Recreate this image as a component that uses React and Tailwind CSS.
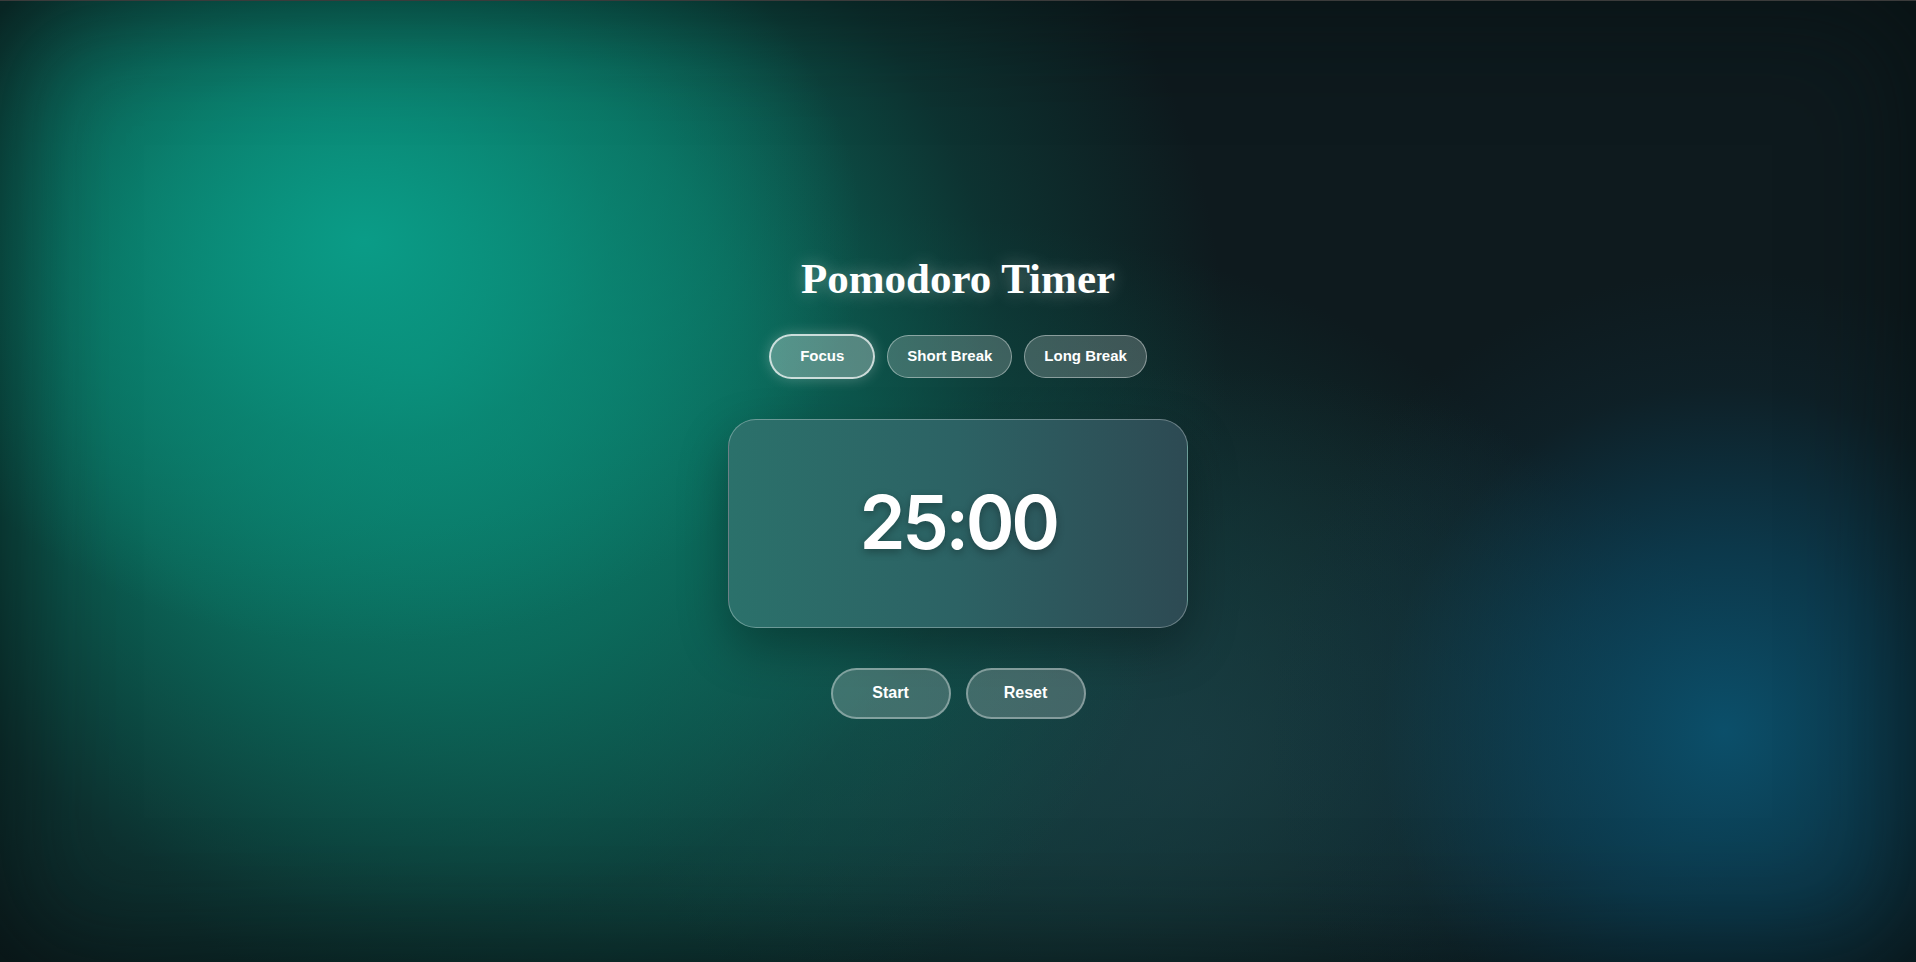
import { useState } from 'react';

const MODES = [
    { key: 'focus', label: 'Focus', mins: 25 },
    { key: 'short', label: 'Short Break', mins: 5 },
    { key: 'long', label: 'Long Break', mins: 15 },
];

const App = () => {
    const [mode, setMode] = useState('focus');
    const current = MODES.find(m => m.key === mode);
    const [seconds, setSeconds] = useState(current.mins * 60);

    const pick = (m) => {
        setMode(m.key);
        setSeconds(m.mins * 60);
    };

    const mm = String(Math.floor(seconds / 60)).padStart(2, '0');
    const ss = String(seconds % 60).padStart(2, '0');

    return (
        <div className="relative w-full h-[962px] overflow-hidden border-t border-[#3b3b3b] bg-[#0e1a1e] bg-[radial-gradient(ellipse_26%_42%_at_19%_25%,rgba(10,156,135,1)_0%,rgba(10,140,120,0.6)_50%,transparent_100%),radial-gradient(ellipse_42%_80%_at_22%_38%,#0a8a76_0%,rgba(10,118,100,0.8)_40%,rgba(12,88,78,0.4)_72%,transparent_100%),radial-gradient(ellipse_24%_48%_at_90%_76%,#0b4f6a_0%,rgba(11,72,98,0.65)_40%,rgba(15,50,65,0.25)_75%,transparent_100%),radial-gradient(ellipse_30%_40%_at_62%_78%,rgba(28,62,70,0.7)_0%,transparent_100%),radial-gradient(ellipse_40%_50%_at_45%_72%,rgba(18,90,82,0.75)_0%,transparent_100%)] font-['Liberation_Sans',Arial,sans-serif]">
            {/* vignette */}
            <div className="pointer-events-none absolute inset-0 shadow-[inset_0_0_120px_rgba(5,14,14,0.7)]" />

            <div className="relative flex flex-col items-center justify-center h-full pt-[7px]">
                <h1 className="text-[43px] leading-[54px] font-bold text-white font-['Liberation_Serif','Times_New_Roman',serif] [text-shadow:0_0_18px_rgba(255,255,255,0.35)] mb-7">
                    Pomodoro Timer
                </h1>

                {/* Mode switch */}
                <div className="flex items-center gap-3 mb-10">
                    {MODES.map(m => (
                        <button
                            key={m.key}
                            onClick={() => pick(m)}
                            className={
                                m.key === mode
                                    ? 'h-[45px] px-[29px] rounded-full border-2 border-white/70 bg-white/30 text-white text-[15px] font-bold shadow-[0_0_14px_rgba(255,255,255,0.25)]'
                                    : 'h-[43px] px-[19px] rounded-full border border-white/40 bg-white/20 text-white text-[15px] font-bold'
                            }
                        >
                            {m.label}
                        </button>
                    ))}
                </div>

                {/* Timer card */}
                <div className="w-[460px] h-[209px] rounded-[28px] border border-white/30 bg-gradient-to-r from-[#2b716b] via-[#2c6264] to-[#2d4a53] shadow-[0_20px_50px_rgba(0,0,0,0.3)] flex items-center justify-center mb-10">
                    <span className="text-white text-[74px] font-semibold tracking-[-0.045em] font-['Inter',sans-serif] [text-shadow:0_3px_8px_rgba(0,0,0,0.3)] pb-[2px]">
                        {mm}:{ss}
                    </span>
                </div>

                {/* Controls */}
                <div className="flex items-center gap-[15px]">
                    <button className="w-[120px] h-[51px] rounded-full border-2 border-white/35 bg-white/20 text-white text-[16px] font-bold">
                        Start
                    </button>
                    <button
                        onClick={() => setSeconds(current.mins * 60)}
                        className="w-[120px] h-[51px] rounded-full border-2 border-white/35 bg-white/20 text-white text-[16px] font-bold"
                    >
                        Reset
                    </button>
                </div>
            </div>
        </div>
    );
};

export default App;
